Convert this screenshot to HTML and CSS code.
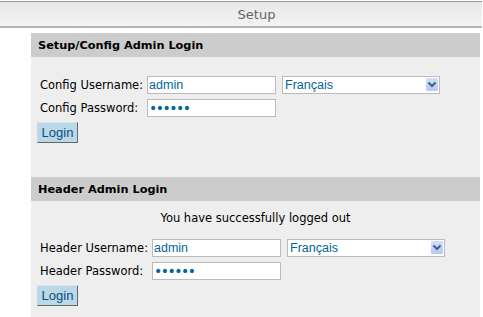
FILE: index.html
```html
<!DOCTYPE html>
<html>
<head>
<meta charset="utf-8">
<link rel="stylesheet" href="styles.css">
</head>
<body>
<div class="topbar">Setup</div>
<div class="panel">
  <div class="panel-header">Setup/Config Admin Login</div>
  <div class="panel-body body-config">
    <div class="form-grid">
      <label class="lbl">Config Username:</label>
      <input class="field" type="text" value="admin">
      <span class="select-wrap">
        <select class="select"><option>Français</option></select>
        <span class="arrow"><svg width="12" height="13" viewBox="0 0 12 13"><path d="M2.5 4.5 L6 8 L9.5 4.5" fill="none" stroke="#4a5d82" stroke-width="2"/></svg></span>
      </span>
      <label class="lbl">Config Password:</label>
      <input class="field pw" type="password" value="123456">
      <span></span>
    </div>
    <button class="btn">Login</button>
  </div>
  <div class="panel-header">Header Admin Login</div>
  <div class="panel-body body-header">
    <div class="msg">You have successfully logged out</div>
    <div class="form-grid">
      <label class="lbl">Header Username:</label>
      <input class="field" type="text" value="admin">
      <span class="select-wrap">
        <select class="select"><option>Français</option></select>
        <span class="arrow"><svg width="12" height="13" viewBox="0 0 12 13"><path d="M2.5 4.5 L6 8 L9.5 4.5" fill="none" stroke="#4a5d82" stroke-width="2"/></svg></span>
      </span>
      <label class="lbl">Header Password:</label>
      <input class="field pw" type="password" value="123456">
      <span></span>
    </div>
    <button class="btn">Login</button>
  </div>
</div>
</body>
</html>
```

FILE: styles.css
```css
html, body {
  margin: 0;
  padding: 0;
  background: #fff;
}
body {
  font-family: "DejaVu Sans", Verdana, sans-serif;
  font-size: 11.5px;
  color: #000;
}
.topbar {
  margin: 1px 1px 0 0;
  padding: 2px 0 0 31px;
  height: 22px;
  line-height: 22px;
  border-top: 1px solid #999;
  border-bottom: 2px solid #b4b4b4;
  background: linear-gradient(#e8e8e8, #f3f3f3);
  text-align: center;
  font-size: 13px;
  color: #666;
}
.panel {
  margin: 5px 3px 0 31px;
  background: #eee;
}
.panel-header {
  background: #ccc;
  height: 24px;
  line-height: 25px;
  padding-left: 7px;
  font-weight: bold;
  font-size: 11.3px;
}
.panel-body {
  padding: 19px 0 34px 6px;
}
.body-header {
  padding-top: 9px;
  padding-bottom: 12px;
}
.msg {
  text-align: center;
  line-height: 16px;
  margin-bottom: 13px;
  margin-left: -6px;
}
.form-grid {
  display: grid;
  grid-template-columns: auto auto auto;
  justify-content: start;
  align-items: center;
  column-gap: 4px;
  row-gap: 5px;
  padding-left: 3px;
}
.lbl {
  line-height: 18px;
}
.field {
  box-sizing: border-box;
  width: 129px;
  height: 18px;
  margin: 0;
  padding: 0 1px;
  border: 1px solid #bbb;
  background: #fff;
  font-family: "Liberation Sans", Arial, sans-serif;
  font-size: 12.5px;
  color: #006699;
  outline: none;
}
.field.pw {
  font-family: "DejaVu Sans", sans-serif;
  font-size: 14px;
  letter-spacing: -1.5px;
  padding-left: 1px;
}
.select-wrap {
  position: relative;
  display: inline-block;
  margin-left: 2px;
  width: 158px;
  height: 18px;
}
.select {
  -webkit-appearance: none;
  appearance: none;
  box-sizing: border-box;
  width: 158px;
  height: 18px;
  margin: 0;
  padding: 0 0 0 2px;
  border: 1px solid #bbb;
  border-radius: 0;
  background: #fff;
  font-family: "Liberation Sans", Arial, sans-serif;
  font-size: 12.5px;
  color: #006699;
}
.arrow {
  position: absolute;
  top: 2px;
  right: 2px;
  width: 12px;
  height: 13px;
  background: linear-gradient(#d2defa, #b3c9f4);
  border-radius: 1px;
  display: flex;
}
.btn {
  display: block;
  box-sizing: border-box;
  margin-top: 5px;
  width: 41px;
  height: 21px;
  padding: 0;
  background: #b9d8e8;
  border: 1px solid;
  border-color: #d8e4ea #666 #666 #c8d8e2;
  font-family: "Liberation Sans", Arial, sans-serif;
  font-size: 13px;
  color: #0d4e7c;
}
```
